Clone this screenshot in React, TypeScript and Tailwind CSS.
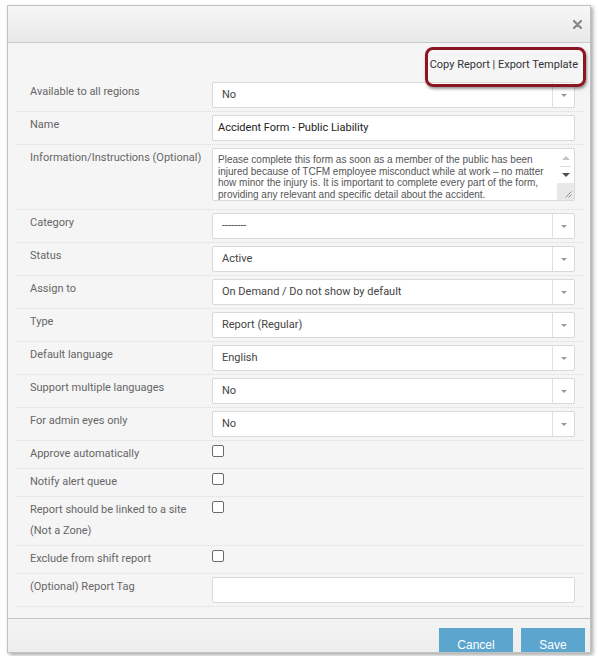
import React from "react";

const SELECTS_TOP = [
  { label: "Available to all regions", value: "No" },
];

const SELECTS_MID = [
  { label: "Category", value: "--------" },
  { label: "Status", value: "Active" },
  { label: "Assign to", value: "On Demand / Do not show by default" },
  { label: "Type", value: "Report (Regular)" },
  { label: "Default language", value: "English" },
  { label: "Support multiple languages", value: "No" },
  { label: "For admin eyes only", value: "No" },
];

const CHECKS = [
  "Approve automatically",
  "Notify alert queue",
  "Report should be linked to a site (Not a Zone)",
  "Exclude from shift report",
];

const INFO =
  "Please complete this form as soon as a member of the public has been injured because of TCFM employee misconduct while at work – no matter how minor the injury is. It is important to complete every part of the form, providing any relevant and specific detail about the accident.";

function Row({ label, children, check }: { label: string; children: React.ReactNode; check?: boolean }) {
  return (
    <div
      className={`flex border-b border-dotted border-[#dcdcdc] ${check ? "pt-[2px] pb-[4px]" : "py-[3px]"}`}
    >
      <div
        className={`w-[196px] shrink-0 pl-[14px] pr-2 text-[11px] text-[#666] ${check ? "leading-[21px]" : "leading-[20px]"}`}
      >
        {label}
      </div>
      <div className="flex-1 pr-[8px]">{children}</div>
    </div>
  );
}

function Select({ value }: { value: string }) {
  return (
    <div className="flex h-[26px] items-center rounded-[2px] border border-[#d9d9d9] bg-white">
      <div className="flex-1 pl-[9px] text-[11px] text-[#444]">{value}</div>
      <div className="flex h-full w-[22px] items-center justify-center border-l border-[#e0e0e0]">
        <div className="h-0 w-0 border-x-[3px] border-t-[3px] border-x-transparent border-t-[#999]" />
      </div>
    </div>
  );
}

function Check() {
  return <div className="mt-[2px] h-[12px] w-[12px] rounded-[2px] border border-[#6b6b6b] bg-white" />;
}

export default function App() {
  return (
    <div
      className="h-[656px] w-[598px] overflow-hidden bg-white pl-[7px] pt-[5px]"
      style={{ fontFamily: "Roboto, 'Liberation Sans', sans-serif" }}
    >
      <div className="flex h-[648px] w-[584px] flex-col overflow-hidden border border-[#c2c2c2] shadow-[2px_2px_4px_rgba(0,0,0,0.35)]">
        {/* Header */}
        <div className="flex h-[37px] shrink-0 items-center justify-end border-b border-[#c9c9c9] bg-gradient-to-b from-[#f6f6f6] to-[#e9e9e9] pr-[8px]">
          <svg width="9" height="9" viewBox="0 0 9 9">
            <path d="M1 1 L8 8 M8 1 L1 8" stroke="#8a8a8a" strokeWidth="2.4" strokeLinecap="round" />
          </svg>
        </div>

        {/* Body */}
        <div className="relative flex-1 bg-[#f5f5f5] pl-[8px] pr-[7px] pt-[14px]">
          <div className="mb-[6px] pr-[5px] text-right text-[11px] leading-[16px] text-[#333]">
            Copy Report | Export Template
          </div>
          <div className="pointer-events-none absolute left-[417px] top-[4px] h-[40px] w-[161px] rounded-[8px] border-[3px] border-[#8b1622] shadow-[1px_2px_3px_rgba(0,0,0,0.4)]" />

          {SELECTS_TOP.map((s) => (
            <Row key={s.label} label={s.label}>
              <Select value={s.value} />
            </Row>
          ))}

          <Row label="Name">
            <div className="flex h-[26px] items-center rounded-[2px] border border-[#d9d9d9] bg-white pl-[5px] text-[11px] text-[#222]">
              Accident Form - Public Liability
            </div>
          </Row>

          <div className="flex border-b border-dotted border-[#dcdcdc] pb-[8px] pt-[3px]">
            <div className="w-[196px] shrink-0 pl-[14px] pr-2 text-[11px] leading-[20px] text-[#666]">
              Information/Instructions (Optional)
            </div>
            <div className="flex-1 pr-[8px]">
              <div className="flex h-[53px] overflow-hidden rounded-[2px] border border-[#d9d9d9] bg-white">
                <div
                  className="flex-1 pl-[5px] pr-[6px] pt-[5px] text-[10px] leading-[11.5px] text-[#555]"
                  style={{ fontFamily: "'Liberation Sans', Arial, sans-serif" }}
                >
                  {INFO}
                </div>
                <div className="flex w-[17px] flex-col">
                  <div className="flex h-[17px] items-center justify-center">
                    <div className="h-0 w-0 border-x-[4px] border-b-[4px] border-x-transparent border-b-[#c4c4c4]" />
                  </div>
                  <div className="mx-[3px] border-t border-[#dedede]" />
                  <div className="flex h-[16px] items-center justify-center">
                    <div className="h-0 w-0 border-x-[4px] border-t-[4px] border-x-transparent border-t-[#505050]" />
                  </div>
                  <div className="flex flex-1 items-end justify-end bg-[#e8e8e8] pb-[2px] pr-[2px]">
                    <svg width="7" height="7" viewBox="0 0 7 7">
                      <path d="M6.5 0.5 L0.5 6.5 M6.5 3.5 L3.5 6.5" stroke="#777" strokeWidth="0.8" />
                    </svg>
                  </div>
                </div>
              </div>
            </div>
          </div>

          {SELECTS_MID.map((s) => (
            <Row key={s.label} label={s.label}>
              <Select value={s.value} />
            </Row>
          ))}

          {CHECKS.map((c) => (
            <Row key={c} label={c} check>
              <Check />
            </Row>
          ))}

          <Row label="(Optional) Report Tag">
            <div className="h-[26px] rounded-[2px] border border-[#d9d9d9] bg-white" />
          </Row>
        </div>

        {/* Footer */}
        <div className="flex h-[34px] shrink-0 justify-end gap-[8px] border-t border-[#c6c6c6] bg-gradient-to-b from-[#f4f4f4] to-[#ededed] pr-[5px] pt-[9px]">
          <div
            className="flex h-[30px] w-[74px] justify-center bg-[#5ba5cf] pt-[8px] text-[12px] text-white"
            style={{ fontFamily: "'Liberation Sans', Arial, sans-serif" }}
          >
            Cancel
          </div>
          <div
            className="flex h-[30px] w-[64px] justify-center bg-[#5ba5cf] pt-[8px] text-[12px] text-white"
            style={{ fontFamily: "'Liberation Sans', Arial, sans-serif" }}
          >
            Save
          </div>
        </div>
      </div>
    </div>
  );
}
